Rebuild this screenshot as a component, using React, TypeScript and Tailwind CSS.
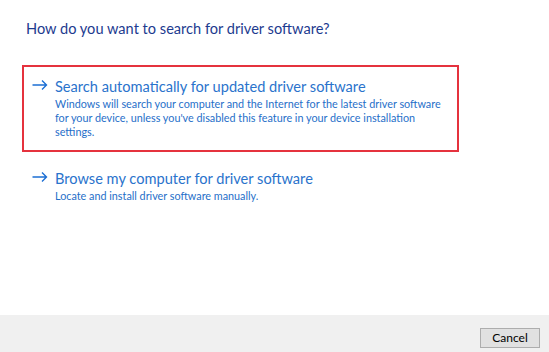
function Arrow() {
  return (
    <svg width="16" height="10" viewBox="0 0 16 10" className="mt-[3px] shrink-0" fill="none">
      <path d="M0.5 5H14.5M10 0.6L14.5 5L10 9.4" stroke="#1c6fd4" strokeWidth="1.4" />
    </svg>
  );
}

function Option({
  title,
  lines,
}: {
  title: string;
  lines: string[];
}) {
  return (
    <div className="flex items-start">
      <Arrow />
      <div className="ml-[7px] min-w-0 whitespace-nowrap">
        <div className="text-[14.6px] leading-[20px] text-[#2a73cc]">{title}</div>
        <div className="text-[10.8px] leading-[14px] text-[#1f6fc9]">
          {lines.map((line) => (
            <div key={line}>{line}</div>
          ))}
        </div>
      </div>
    </div>
  );
}

export default function App() {
  return (
    <div className="flex h-[352px] w-[549px] flex-col bg-white font-['Lato',sans-serif]">
      <div className="flex-1 px-[26px] pt-[19px]">
        <h1 className="text-[14.6px] leading-[20px] font-normal text-[#1d3b8f]">
          How do you want to search for driver software?
        </h1>

        <div className="mt-[26px] -ml-[4px] w-[437px] border-2 border-[#e5323e] px-[8px] pt-[10px] pb-[11px]">
          <Option
            title="Search automatically for updated driver software"
            lines={[
              "Windows will search your computer and the Internet for the latest driver software",
              "for your device, unless you've disabled this feature in your device installation",
              "settings.",
            ]}
          />
        </div>

        <div className="mt-[17px] px-[6px]">
          <Option
            title="Browse my computer for driver software"
            lines={["Locate and install driver software manually."]}
          />
        </div>
      </div>

      <div className="flex h-[37px] items-start justify-end bg-[#f0f0f0] pt-[13px] pr-[9px]">
        <button className="h-[20px] w-[60px] border border-[#adadad] bg-[#e1e1e1] text-[12px] leading-none text-black">
          Cancel
        </button>
      </div>
    </div>
  );
}
